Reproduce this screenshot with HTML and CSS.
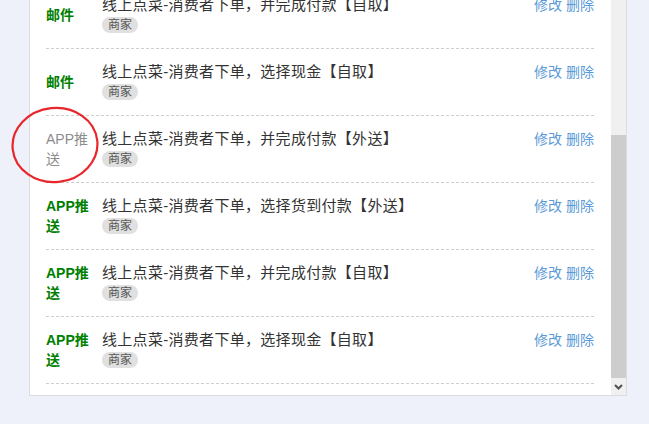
FILE: index.html
```html
<!DOCTYPE html>
<html lang="zh-CN">
<head>
    <meta charset="UTF-8">
    <meta name="viewport" content="width=device-width, initial-scale=1.0">
    <title>消息通知设置</title>
    <link rel="stylesheet" href="styles.css">
</head>
<body>
    <div class="panel">
        <div class="viewport">
            <div class="list">
                <div class="row">
                    <div class="channel on">微信</div>
                    <div class="info">
                        <div class="title">线上点菜-消费者下单，并完成付款【自取】</div>
                        <span class="tag">商家</span>
                    </div>
                    <div class="actions"><a>修改</a> <a>删除</a></div>
                </div>
                <div class="row">
                    <div class="channel on">微信</div>
                    <div class="info">
                        <div class="title">线上点菜-消费者下单，选择现金【自取】</div>
                        <span class="tag">商家</span>
                    </div>
                    <div class="actions"><a>修改</a> <a>删除</a></div>
                </div>
                <div class="row">
                    <div class="channel on">邮件</div>
                    <div class="info">
                        <div class="title">线上点菜-消费者下单，选择货到付款【外送】</div>
                        <span class="tag">商家</span>
                    </div>
                    <div class="actions"><a>修改</a> <a>删除</a></div>
                </div>
                <div class="row">
                    <div class="channel on">邮件</div>
                    <div class="info">
                        <div class="title">线上点菜-消费者下单，并完成付款【自取】</div>
                        <span class="tag">商家</span>
                    </div>
                    <div class="actions"><a>修改</a> <a>删除</a></div>
                </div>
                <div class="row">
                    <div class="channel on">邮件</div>
                    <div class="info">
                        <div class="title">线上点菜-消费者下单，选择现金【自取】</div>
                        <span class="tag">商家</span>
                    </div>
                    <div class="actions"><a>修改</a> <a>删除</a></div>
                </div>
                <div class="row">
                    <div class="channel off">APP推送</div>
                    <div class="info">
                        <div class="title">线上点菜-消费者下单，并完成付款【外送】</div>
                        <span class="tag">商家</span>
                    </div>
                    <div class="actions"><a>修改</a> <a>删除</a></div>
                </div>
                <div class="row">
                    <div class="channel on">APP推送</div>
                    <div class="info">
                        <div class="title">线上点菜-消费者下单，选择货到付款【外送】</div>
                        <span class="tag">商家</span>
                    </div>
                    <div class="actions"><a>修改</a> <a>删除</a></div>
                </div>
                <div class="row">
                    <div class="channel on">APP推送</div>
                    <div class="info">
                        <div class="title">线上点菜-消费者下单，并完成付款【自取】</div>
                        <span class="tag">商家</span>
                    </div>
                    <div class="actions"><a>修改</a> <a>删除</a></div>
                </div>
                <div class="row">
                    <div class="channel on">APP推送</div>
                    <div class="info">
                        <div class="title">线上点菜-消费者下单，选择现金【自取】</div>
                        <span class="tag">商家</span>
                    </div>
                    <div class="actions"><a>修改</a> <a>删除</a></div>
                </div>
            </div>
        </div>
        <div class="scrollbar">
            <div class="track"></div>
            <div class="thumb"></div>
            <div class="arrow">
                <svg width="9" height="6" viewBox="0 0 9 6">
                    <polyline points="1,1 4.5,4.5 8,1" fill="none" stroke="#505050" stroke-width="2"/>
                </svg>
            </div>
        </div>
    </div>

    <!-- hand-drawn red circle around the disabled item -->
    <svg class="mark" width="90" height="80" viewBox="0 0 90 80">
        <ellipse cx="44" cy="39" rx="42.5" ry="37" fill="none" stroke="#e8262b" stroke-width="2.2" transform="rotate(-6 44 39)"/>
    </svg>
</body>
</html>
```

FILE: styles.css
```css
body {
    margin: 0;
    background-color: #eef1f9;
    font-family: "Liberation Sans", "Noto Sans CJK SC", sans-serif;
    color: #333;
    overflow: hidden;
}
.panel {
    box-sizing: border-box;
    width: 598px;
    height: 502px;
    margin: -106px 0 0 29px;
    background-color: #fff;
    border: 1px solid #dcdcdc;
    display: flex;
}
.viewport {
    flex: 1;
    overflow: hidden;
    display: flex;
    flex-direction: column;
    justify-content: flex-end;
}
.list {
    padding: 0 17px 11px 16px;
}
.row {
    display: flex;
    align-items: flex-start;
    padding: 13px 0;
    border-bottom: 1px dashed #cfcfcf;
}
.channel {
    width: 50px;
    margin-right: 6px;
    align-self: center;
    font-size: 14px;
    line-height: 20px;
}
.channel.on {
    color: #008000;
    font-weight: bold;
}
.channel.off {
    color: #8c8c8c;
}
.info {
    flex: 1;
    display: flex;
    flex-direction: column;
    align-items: flex-start;
}
.title {
    font-size: 15px;
    line-height: 20px;
    color: #333;
    letter-spacing: 0.3px;
}
.tag {
    margin: 2px 0;
    padding: 0 6px;
    height: 16px;
    line-height: 16px;
    font-size: 12px;
    color: #555;
    background-color: #e0e0e0;
    border-radius: 8px;
}
.actions {
    font-size: 14px;
    line-height: 20px;
}
.actions a {
    color: #5a9ad8;
    cursor: pointer;
}
.scrollbar {
    width: 15px;
    display: flex;
    flex-direction: column;
    background-color: #f0f0f0;
}
.track {
    flex: 1;
}
.thumb {
    height: 243px;
    background-color: #cdcdcd;
}
.arrow {
    height: 17px;
    display: flex;
    align-items: center;
    justify-content: center;
}
.mark {
    position: absolute;
    left: 11px;
    top: 106px;
}
```
